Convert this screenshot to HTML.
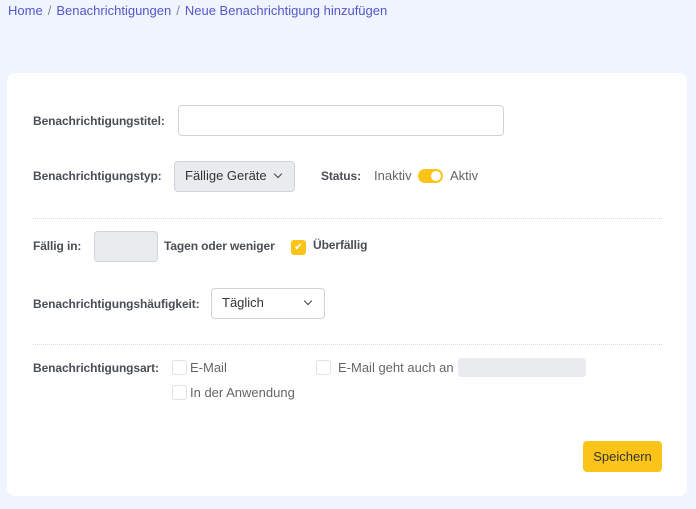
<!DOCTYPE html>
<html><head><meta charset="utf-8"><style>
*{box-sizing:border-box}
body{margin:0;width:696px;height:509px;background:#f0f4fe;font-family:"Liberation Sans",sans-serif;font-size:13px;color:#495057;position:relative;overflow:hidden}
.a{position:absolute;white-space:nowrap}
.crumb{left:8px;top:3px;color:#5457c9;font-size:13px}
.crumb span{color:#888;margin:0 5px}
.card{position:absolute;left:7px;top:73px;width:680px;height:423px;background:#fff;border-radius:8px}
.lbl{font-weight:bold;color:#4a4f55;font-size:12px;letter-spacing:-0.1px}
.inp{position:absolute;border:1px solid #ced4da;border-radius:4px;background:#fff}
.gray{background:#e9ecef}
.hr{position:absolute;left:33px;width:629px;border-top:1px dotted #d5d8dc}
.cb{position:absolute;width:15px;height:15px;border:1px solid #dee2e6;border-radius:3px;background:#fff}
.chev{position:absolute;width:6px;height:6px;border-right:1.3px solid #444;border-bottom:1.3px solid #444;transform:rotate(45deg)}
</style></head><body>
<div class="a crumb">Home<span>/</span>Benachrichtigungen<span>/</span>Neue Benachrichtigung hinzufügen</div>
<div class="card"></div>
<div class="a lbl" style="left:33px;top:114px">Benachrichtigungstitel:</div>
<div class="inp" style="left:178px;top:105px;width:326px;height:31px"></div>
<div class="a lbl" style="left:33px;top:169px">Benachrichtigungstyp:</div>
<div class="inp gray" style="left:174px;top:161px;width:121px;height:31px"></div>
<div class="a" style="left:185px;top:168px;color:#333">Fällige Geräte</div>
<div class="chev" style="left:275px;top:171px"></div>
<div class="a lbl" style="left:321px;top:169px">Status:</div>
<div class="a" style="left:374px;top:168px;color:#666">Inaktiv</div>
<div class="a" style="left:418px;top:169px;width:25px;height:14px;border-radius:7px;background:#fcc419"></div>
<div class="a" style="left:431px;top:171px;width:10px;height:10px;border-radius:5px;background:#fff"></div>
<div class="a" style="left:450px;top:168px;color:#666">Aktiv</div>
<div class="hr" style="top:218px"></div>
<div class="a lbl" style="left:33px;top:239px">Fällig in:</div>
<div class="inp gray" style="left:94px;top:231px;width:64px;height:31px"></div>
<div class="a lbl" style="left:164px;top:239px">Tagen oder weniger</div>
<div class="a" style="left:291px;top:240px;width:15px;height:15px;border-radius:3px;background:#fcc419;color:#fff;font-size:10px;text-align:center;line-height:15px">✔</div>
<div class="a lbl" style="left:313px;top:238px">Überfällig</div>
<div class="a lbl" style="left:33px;top:297px">Benachrichtigungshäufigkeit:</div>
<div class="inp" style="left:211px;top:288px;width:114px;height:31px"></div>
<div class="a" style="left:222px;top:295px;color:#333">Täglich</div>
<div class="chev" style="left:305px;top:298px"></div>
<div class="hr" style="top:344px"></div>
<div class="a lbl" style="left:33px;top:361px">Benachrichtigungsart:</div>
<div class="cb" style="left:172px;top:360px"></div>
<div class="a" style="left:190px;top:360px;color:#666">E-Mail</div>
<div class="cb" style="left:316px;top:360px"></div>
<div class="a" style="left:338px;top:360px;color:#666">E-Mail geht auch an</div>
<div class="a" style="left:458px;top:358px;width:128px;height:19px;background:#e9ecef;border-radius:3px"></div>
<div class="cb" style="left:172px;top:385px"></div>
<div class="a" style="left:190px;top:385px;color:#666">In der Anwendung</div>
<div class="a" style="left:583px;top:441px;width:79px;height:31px;background:#fcc419;border-radius:4px;color:#333;text-align:center;line-height:31px">Speichern</div>
</body></html>
